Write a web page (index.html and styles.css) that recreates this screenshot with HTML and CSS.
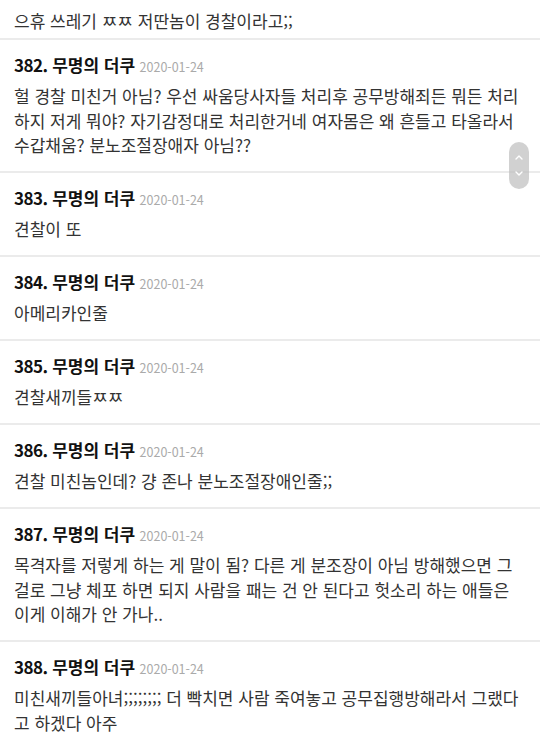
FILE: index.html
```html
<!DOCTYPE html>
<html lang="ko">
<head>
    <meta charset="UTF-8">
    <meta name="viewport" content="width=device-width, initial-scale=1.0">
    <title>댓글</title>
    <link rel="stylesheet" href="styles.css">
</head>
<body>

    <div class="comment-list">
        <div class="comment first">
            <p class="body">으휴 쓰레기 ㅉㅉ 저딴놈이 경찰이라고;;</p>
        </div>
        <div class="comment">
            <div class="head"><span class="num">382.</span> <span class="name">무명의 더쿠</span> <span class="date">2020-01-24</span></div>
            <p class="body">헐 경찰 미친거 아님? 우선 싸움당사자들 처리후 공무방해죄든 뭐든 처리<br>하지 저게 뭐야? 자기감정대로 처리한거네 여자몸은 왜 흔들고 타올라서<br>수갑채움? 분노조절장애자 아님??</p>
        </div>
        <div class="comment">
            <div class="head"><span class="num">383.</span> <span class="name">무명의 더쿠</span> <span class="date">2020-01-24</span></div>
            <p class="body">견찰이 또</p>
        </div>
        <div class="comment">
            <div class="head"><span class="num">384.</span> <span class="name">무명의 더쿠</span> <span class="date">2020-01-24</span></div>
            <p class="body">아메리카인줄</p>
        </div>
        <div class="comment">
            <div class="head"><span class="num">385.</span> <span class="name">무명의 더쿠</span> <span class="date">2020-01-24</span></div>
            <p class="body">견찰새끼들ㅉㅉ</p>
        </div>
        <div class="comment">
            <div class="head"><span class="num">386.</span> <span class="name">무명의 더쿠</span> <span class="date">2020-01-24</span></div>
            <p class="body">견찰 미친놈인데? 걍 존나 분노조절장애인줄;;</p>
        </div>
        <div class="comment">
            <div class="head"><span class="num">387.</span> <span class="name">무명의 더쿠</span> <span class="date">2020-01-24</span></div>
            <p class="body">목격자를 저렇게 하는 게 말이 됨? 다른 게 분조장이 아님 방해했으면 그<br>걸로 그냥 체포 하면 되지 사람을 패는 건 안 된다고 헛소리 하는 애들은<br>이게 이해가 안 가나..</p>
        </div>
        <div class="comment">
            <div class="head"><span class="num">388.</span> <span class="name">무명의 더쿠</span> <span class="date">2020-01-24</span></div>
            <p class="body">미친새끼들아녀;;;;;;;; 더 빡치면 사람 죽여놓고 공무집행방해라서 그랬다<br>고 하겠다 아주</p>
        </div>
    </div>

    <div class="scroll-pill">
        <svg width="20" height="47" viewBox="0 0 20 47">
            <polyline points="7,17 10,14 13,17" fill="none" stroke="#fff" stroke-width="1.4" stroke-linecap="round" stroke-linejoin="round"/>
            <polyline points="7,30 10,33 13,30" fill="none" stroke="#fff" stroke-width="1.4" stroke-linecap="round" stroke-linejoin="round"/>
        </svg>
    </div>

</body>
</html>
```

FILE: styles.css
```css
body {
    margin: 0;
    background-color: #fff;
    font-family: "Noto Sans CJK KR", "Noto Sans", sans-serif;
    color: #333;
}
.comment-list {
    display: flex;
    flex-direction: column;
}
.comment {
    padding: 13px 14px 13.5px 14px;
    border-bottom: 2px solid #ebebeb;
}
.comment.first {
    padding-top: 9px;
    padding-bottom: 4.5px;
}
.head {
    line-height: 24px;
    height: 24px;
    margin-bottom: 7px;
}
.num,
.name {
    font-size: 17px;
    font-weight: bold;
    color: #111;
}
.num {
    letter-spacing: -0.5px;
}
.date {
    font-size: 12.5px;
    color: #aaa;
}
.body {
    margin: 0;
    font-size: 17px;
    line-height: 24.5px;
    color: #333;
    white-space: nowrap;
}
.scroll-pill {
    position: fixed;
    left: 509px;
    top: 142px;
    width: 20px;
    height: 47px;
    border-radius: 10px;
    background-color: rgba(190, 190, 190, 0.7);
}
.scroll-pill svg {
    display: block;
}
```
